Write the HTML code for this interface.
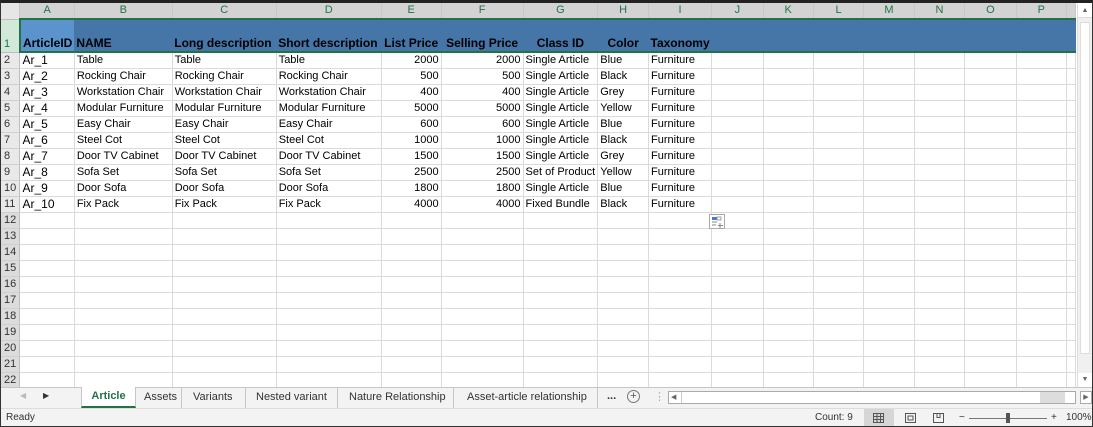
<!DOCTYPE html>
<html><head><meta charset="utf-8"><style>
*{box-sizing:border-box;margin:0;padding:0}
body{width:1093px;height:427px;overflow:hidden;background:#fff;font-family:"Liberation Sans",Arial,sans-serif;position:relative}
.frame{position:absolute;left:0;top:0;width:1093px;height:427px;border:1px solid #333;border-top:3px solid #222;pointer-events:none;z-index:10}
.grid{position:absolute;left:1px;top:3px;width:1075px;height:384px;overflow:hidden}
table{border-collapse:collapse;table-layout:fixed}
td{border-right:1px solid #dadada;border-bottom:1px solid #dadada;height:16px;font-size:11px;white-space:nowrap;overflow:hidden;padding:0 2px;color:#000;line-height:15px}
tr.ch td{background:#e6e6e6;color:#444;text-align:center;font-size:11px;border-right:1px solid #c8c8c8;border-bottom:1px solid #bdbdbd}
tr.ch td.sel{background:#d3d3d3;color:#217346}
td.rh{background:#e9e9e9;color:#333;text-align:left;padding-left:3px;border-right:1px solid #bdbdbd;border-bottom:1px solid #cfcfcf;font-size:11px}
td.rh.g{background:#dcdcdc}
tr.h1 td{height:33px;background:#4675a8;color:#000;font-weight:bold;font-size:12px;vertical-align:bottom;line-height:15px;border-right:none;border-bottom:2px solid #217346;border-top:2px solid #217346}
tr.h1 td.rh{background:#d2e8d8;color:#217346;font-weight:normal;border-top:none;border-bottom:1px solid #bdbdbd;border-right:1px solid #bdbdbd;font-size:11px}
tr.h1 td.a{background:#5b94cc;border-left:2px solid #217346}
.c{text-align:center}.r{text-align:right}
td.ar{font-size:12px}
.vs{position:absolute;left:1077px;top:4px;width:15px;height:383px;background:#f0f0f0;border-left:1px solid #ddd}
.tabs{position:absolute;left:1px;top:387px;width:1091px;height:21px;background:#f3f3f3;border-top:1px solid #c6c6c6;font-size:11px;color:#333;white-space:nowrap}
.tab{position:absolute;top:0;height:20px;line-height:18px;padding:0 8px;border-right:1px solid #c6c6c6;white-space:nowrap}
.status{position:absolute;left:1px;top:408px;width:1091px;height:18px;background:#f3f3f3;border-top:1px solid #ddd;font-size:10px;color:#333;line-height:17px}
</style></head><body>
<div class="grid"><table>
<colgroup><col style="width:19px"><col style="width:53px"><col style="width:98px"><col style="width:104px"><col style="width:105px"><col style="width:60px"><col style="width:82px"><col style="width:71px"><col style="width:51px"><col style="width:63px"><col style="width:52px"><col style="width:51px"><col style="width:51px"><col style="width:51px"><col style="width:51px"><col style="width:52px"><col style="width:51px"><col style="width:9px"></colgroup>
<tr class="ch"><td style="background:#e6e6e6"></td><td class="sel">A</td><td class="sel">B</td><td class="sel">C</td><td class="sel">D</td><td class="sel">E</td><td class="sel">F</td><td class="sel">G</td><td class="sel">H</td><td class="sel">I</td><td class="sel">J</td><td class="sel">K</td><td class="sel">L</td><td class="sel">M</td><td class="sel">N</td><td class="sel">O</td><td class="sel">P</td><td class="sel"></td></tr>
<tr class="h1"><td class="rh">1</td><td class="a">ArticleID</td><td>NAME</td><td>Long description</td><td>Short description</td><td class="c">List Price</td><td class="c">Selling Price</td><td class="c">Class ID</td><td class="c">Color</td><td class="c">Taxonomy</td><td></td><td></td><td></td><td></td><td></td><td></td><td></td><td></td></tr>
<tr><td class="rh">2</td><td class="ar">Ar_1</td><td>Table</td><td>Table</td><td>Table</td><td class="r">2000</td><td class="r">2000</td><td>Single Article</td><td>Blue</td><td>Furniture</td><td></td><td></td><td></td><td></td><td></td><td></td><td></td><td></td></tr>
<tr><td class="rh">3</td><td class="ar">Ar_2</td><td>Rocking Chair</td><td>Rocking Chair</td><td>Rocking Chair</td><td class="r">500</td><td class="r">500</td><td>Single Article</td><td>Black</td><td>Furniture</td><td></td><td></td><td></td><td></td><td></td><td></td><td></td><td></td></tr>
<tr><td class="rh">4</td><td class="ar">Ar_3</td><td>Workstation Chair</td><td>Workstation Chair</td><td>Workstation Chair</td><td class="r">400</td><td class="r">400</td><td>Single Article</td><td>Grey</td><td>Furniture</td><td></td><td></td><td></td><td></td><td></td><td></td><td></td><td></td></tr>
<tr><td class="rh">5</td><td class="ar">Ar_4</td><td>Modular Furniture</td><td>Modular Furniture</td><td>Modular Furniture</td><td class="r">5000</td><td class="r">5000</td><td>Single Article</td><td>Yellow</td><td>Furniture</td><td></td><td></td><td></td><td></td><td></td><td></td><td></td><td></td></tr>
<tr><td class="rh">6</td><td class="ar">Ar_5</td><td>Easy Chair</td><td>Easy Chair</td><td>Easy Chair</td><td class="r">600</td><td class="r">600</td><td>Single Article</td><td>Blue</td><td>Furniture</td><td></td><td></td><td></td><td></td><td></td><td></td><td></td><td></td></tr>
<tr><td class="rh">7</td><td class="ar">Ar_6</td><td>Steel Cot</td><td>Steel Cot</td><td>Steel Cot</td><td class="r">1000</td><td class="r">1000</td><td>Single Article</td><td>Black</td><td>Furniture</td><td></td><td></td><td></td><td></td><td></td><td></td><td></td><td></td></tr>
<tr><td class="rh">8</td><td class="ar">Ar_7</td><td>Door TV Cabinet</td><td>Door TV Cabinet</td><td>Door TV Cabinet</td><td class="r">1500</td><td class="r">1500</td><td>Single Article</td><td>Grey</td><td>Furniture</td><td></td><td></td><td></td><td></td><td></td><td></td><td></td><td></td></tr>
<tr><td class="rh">9</td><td class="ar">Ar_8</td><td>Sofa Set</td><td>Sofa Set</td><td>Sofa Set</td><td class="r">2500</td><td class="r">2500</td><td style="text-overflow:clip">Set of Product</td><td>Yellow</td><td>Furniture</td><td></td><td></td><td></td><td></td><td></td><td></td><td></td><td></td></tr>
<tr><td class="rh">10</td><td class="ar">Ar_9</td><td>Door Sofa</td><td>Door Sofa</td><td>Door Sofa</td><td class="r">1800</td><td class="r">1800</td><td>Single Article</td><td>Blue</td><td>Furniture</td><td></td><td></td><td></td><td></td><td></td><td></td><td></td><td></td></tr>
<tr><td class="rh">11</td><td class="ar">Ar_10</td><td>Fix Pack</td><td>Fix Pack</td><td>Fix Pack</td><td class="r">4000</td><td class="r">4000</td><td>Fixed Bundle</td><td>Black</td><td>Furniture</td><td></td><td></td><td></td><td></td><td></td><td></td><td></td><td></td></tr>
<tr><td class="rh g">12</td><td></td><td></td><td></td><td></td><td></td><td></td><td></td><td></td><td></td><td></td><td></td><td></td><td></td><td></td><td></td><td></td><td></td></tr>
<tr><td class="rh g">13</td><td></td><td></td><td></td><td></td><td></td><td></td><td></td><td></td><td></td><td></td><td></td><td></td><td></td><td></td><td></td><td></td><td></td></tr>
<tr><td class="rh g">14</td><td></td><td></td><td></td><td></td><td></td><td></td><td></td><td></td><td></td><td></td><td></td><td></td><td></td><td></td><td></td><td></td><td></td></tr>
<tr><td class="rh g">15</td><td></td><td></td><td></td><td></td><td></td><td></td><td></td><td></td><td></td><td></td><td></td><td></td><td></td><td></td><td></td><td></td><td></td></tr>
<tr><td class="rh g">16</td><td></td><td></td><td></td><td></td><td></td><td></td><td></td><td></td><td></td><td></td><td></td><td></td><td></td><td></td><td></td><td></td><td></td></tr>
<tr><td class="rh g">17</td><td></td><td></td><td></td><td></td><td></td><td></td><td></td><td></td><td></td><td></td><td></td><td></td><td></td><td></td><td></td><td></td><td></td></tr>
<tr><td class="rh g">18</td><td></td><td></td><td></td><td></td><td></td><td></td><td></td><td></td><td></td><td></td><td></td><td></td><td></td><td></td><td></td><td></td><td></td></tr>
<tr><td class="rh g">19</td><td></td><td></td><td></td><td></td><td></td><td></td><td></td><td></td><td></td><td></td><td></td><td></td><td></td><td></td><td></td><td></td><td></td></tr>
<tr><td class="rh g">20</td><td></td><td></td><td></td><td></td><td></td><td></td><td></td><td></td><td></td><td></td><td></td><td></td><td></td><td></td><td></td><td></td><td></td></tr>
<tr><td class="rh g">21</td><td></td><td></td><td></td><td></td><td></td><td></td><td></td><td></td><td></td><td></td><td></td><td></td><td></td><td></td><td></td><td></td><td></td></tr>
<tr><td class="rh g">22</td><td></td><td></td><td></td><td></td><td></td><td></td><td></td><td></td><td></td><td></td><td></td><td></td><td></td><td></td><td></td><td></td><td></td></tr>
</table></div>
<svg style="position:absolute;left:709px;top:214px" width="16" height="15"><rect x="0.5" y="0.5" width="15" height="14" fill="#fff" stroke="#aaa"/><rect x="3" y="3" width="5" height="3" fill="#3a7fd5"/><rect x="8" y="3" width="4" height="3" fill="none" stroke="#888" stroke-width=".8"/><path d="M3 8h5M3 11h4M11 9v5M9 11.5h5" stroke="#888" stroke-width="1" fill="none"/></svg>
<div class="vs"><div style="height:14px;border-bottom:1px solid #ddd;text-align:center;font-size:7px;line-height:14px;color:#666;background:#fff">▲</div><div style="position:absolute;left:2px;top:18px;width:10px;height:332px;background:#fff;border:1px solid #ddd"></div><div style="position:absolute;bottom:0;width:14px;height:14px;text-align:center;font-size:7px;line-height:14px;color:#666;background:#fff">▼</div></div>
<div class="tabs">
<span style="position:absolute;left:19px;top:3px;font-size:8px;color:#bbb">◀</span><span style="position:absolute;left:42px;top:3px;font-size:8px;color:#333">▶</span>
<div class="tab" style="left:80px;width:55px;background:#fff;color:#217346;font-weight:bold;border-left:1px solid #c6c6c6;border-bottom:2px solid #217346;text-align:center;top:-1px;height:21px">Article</div>
<div class="tab" style="left:135px;width:46px">Assets</div>
<div class="tab" style="left:181px;width:64px;padding-left:11px">Variants</div>
<div class="tab" style="left:245px;width:92px;padding-left:10px">Nested variant</div>
<div class="tab" style="left:337px;width:116px;padding-left:11px">Nature Relationship</div>
<div class="tab" style="left:453px;width:144px;padding-left:13px">Asset-article relationship</div>
<span style="position:absolute;left:606px;top:2px;font-weight:bold">...</span>
<span style="position:absolute;left:626px;top:2px;width:13px;height:13px;border:1px solid #777;border-radius:50%;font-size:11px;line-height:11px;text-align:center;color:#555">+</span>
<span style="position:absolute;left:653px;top:2px;color:#aaa">⋮</span>
<div style="position:absolute;left:667px;top:3px;width:408px;height:13px;background:#fff;border:1px solid #aaa"><span style="position:absolute;left:2px;top:0;font-size:7px;line-height:11px;color:#666">◀</span><div style="position:absolute;left:12px;top:0;width:0;height:11px;border-left:1px solid #ccc"></div><div style="position:absolute;right:10px;top:0;width:25px;height:11px;background:#ddd"></div></div>
<div style="position:absolute;left:1079px;top:3px;width:12px;height:13px;border:1px solid #aaa;background:#fff;font-size:7px;line-height:11px;text-align:center;color:#666">▶</div>
</div>
<div class="status">
<span style="position:absolute;left:5px">Ready</span>
<span style="position:absolute;left:814px">Count: 9</span>
<div style="position:absolute;left:863px;top:0;width:30px;height:18px;background:#d6d6d6"></div>
<svg style="position:absolute;left:872px;top:4px" width="11" height="10"><path d="M.5 .5h10v9h-10zM4 .5v9M7.5 .5v9M.5 3.5h10M.5 6.5h10" stroke="#555" fill="none"/></svg>
<svg style="position:absolute;left:904px;top:4px" width="11" height="10"><path d="M.5 .5h10v9h-10zM3 3h5v4H3z" stroke="#555" fill="none"/></svg>
<svg style="position:absolute;left:932px;top:4px" width="11" height="10"><path d="M.5 .5h10v9h-10zM4 .5v4h3v-4" stroke="#555" fill="none"/></svg>
<span style="position:absolute;left:958px;top:0">−</span>
<div style="position:absolute;left:968px;top:9px;width:78px;height:1px;background:#777"></div>
<div style="position:absolute;left:1005px;top:4px;width:4px;height:10px;background:#555"></div>
<span style="position:absolute;left:1050px;top:0">+</span>
<span style="position:absolute;left:1065px">100%</span>
</div>
<div class="frame"></div>
</body></html>
